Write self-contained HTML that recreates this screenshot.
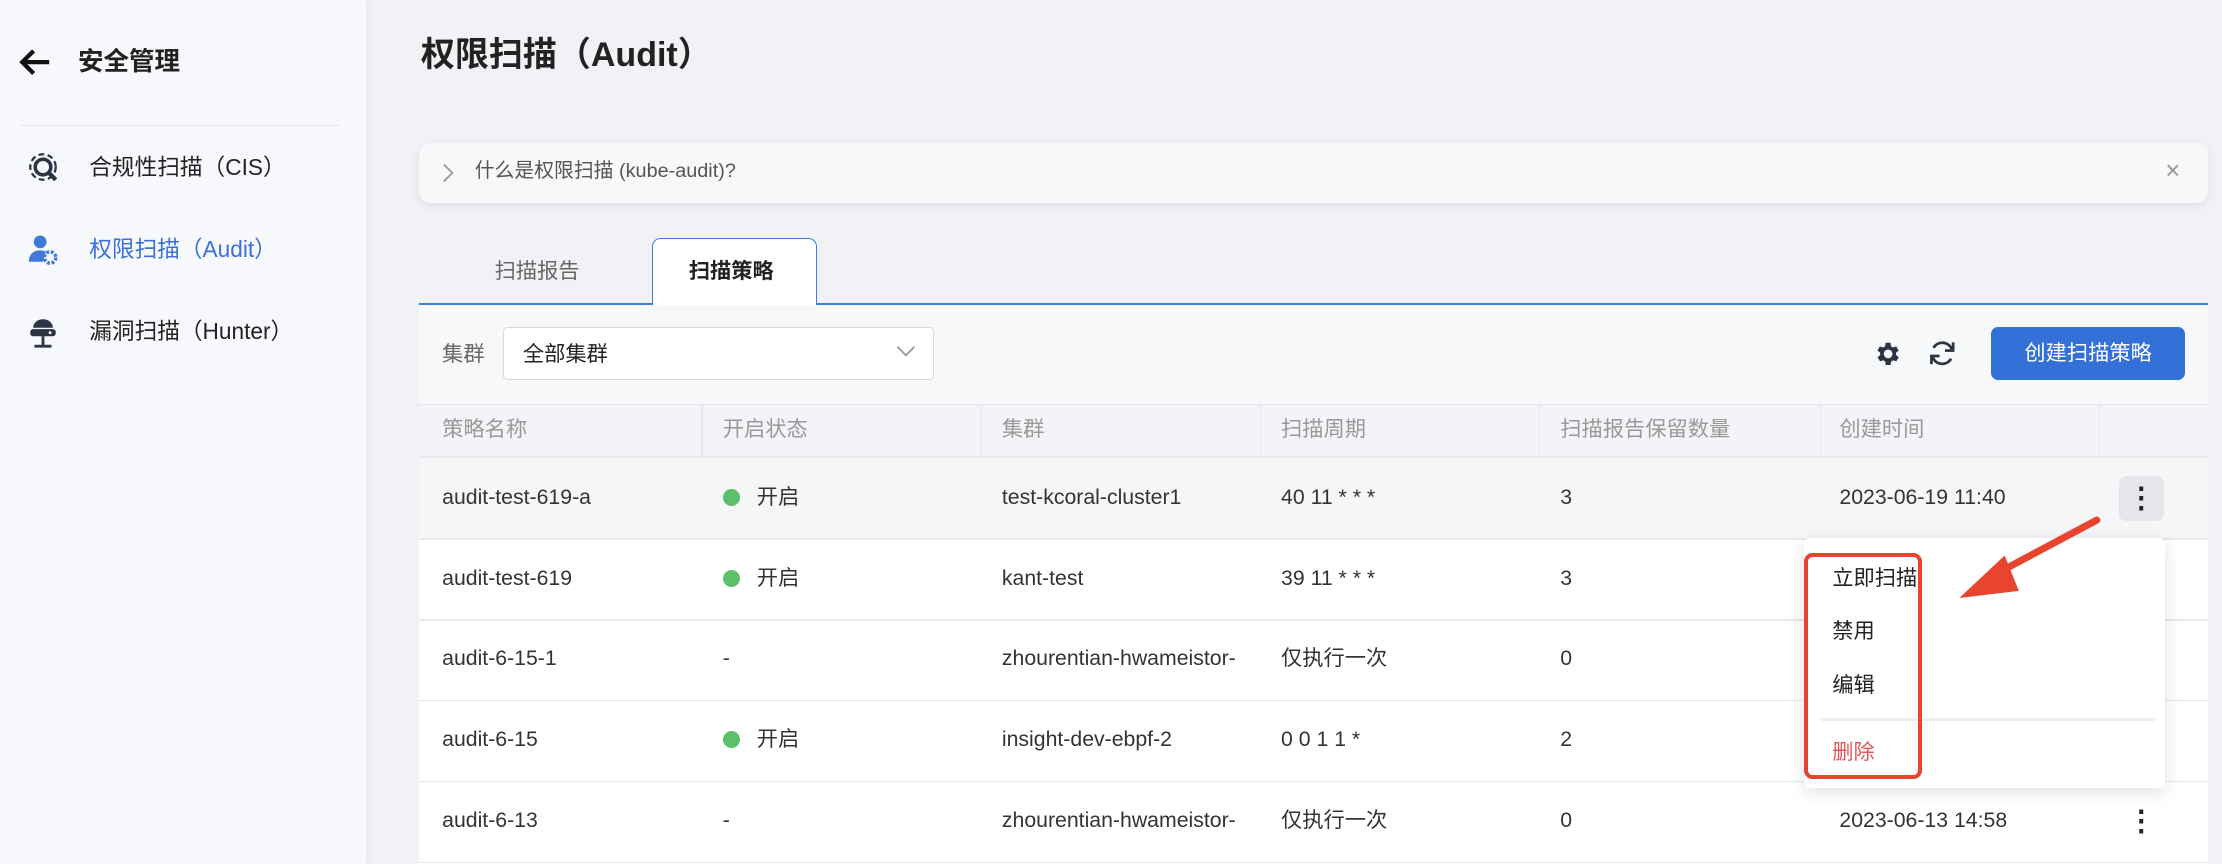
<!DOCTYPE html>
<html><head><meta charset="utf-8">
<style>
html,body{margin:0;padding:0;}
body{width:1568px;height:610px;zoom:1.41709;overflow:hidden;background:#f1f2f6;font-family:"Liberation Sans","Noto Sans CJK SC",sans-serif;position:relative;color:#222;}
.a{position:absolute;}
.side{left:0;top:0;width:258px;height:610px;background:#f7f8fc;box-shadow:1px 0 4px rgba(0,0,0,0.05);}
.mi{font-size:16px;color:#222;line-height:22px;}
.t{font-size:15px;color:#333;white-space:nowrap;line-height:22px;}
.h{font-size:15px;color:#999;line-height:22px;}
.vl{width:1px;background:#e4e6ea;top:285px;height:37px;}
.hl{height:1px;background:#e6e8ec;left:296px;width:1262px;}
.dot{width:12px;height:12px;border-radius:50%;background:#5cc06a;}
</style></head><body>
<div class="a side"></div>
<svg class="a" style="left:13px;top:34px" width="24" height="20" viewBox="0 0 24 20"><path d="M22 10H4M11 2L3 10l8 8" stroke="#111" stroke-width="3" fill="none"/></svg>
<div class="a" style="left:55px;top:32px;font-size:18px;font-weight:bold;line-height:24px;">安全管理</div>
<div class="a" style="left:14px;top:88px;width:226px;height:1px;background:#e4e6ea"></div>
<svg class="a" style="left:18px;top:106px" width="26" height="26" viewBox="0 0 26 26"><circle cx="12" cy="12" r="9" stroke="#2b3443" stroke-width="1.6" stroke-dasharray="4 2.5" fill="none"/><circle cx="12" cy="12" r="5.5" stroke="#2b3443" stroke-width="2.5" fill="none"/><path d="M16 16l5 5" stroke="#2b3443" stroke-width="3"/></svg>
<div class="a mi" style="left:63px;top:107px;">合规性扫描（CIS）</div>
<svg class="a" style="left:18px;top:164px" width="26" height="26" viewBox="0 0 26 26"><circle cx="10" cy="7" r="4.5" fill="#3f7ad9"/><path d="M2 21c0-5 3-8 8-8 2 0 3 .5 4 1l-2 7z" fill="#3f7ad9"/><circle cx="17" cy="18" r="4" stroke="#3f7ad9" stroke-width="2.5" stroke-dasharray="2 1.2" fill="none"/></svg>
<div class="a mi" style="left:63px;top:165px;color:#3a70d8;">权限扫描（Audit）</div>
<svg class="a" style="left:18px;top:222px" width="26" height="26" viewBox="0 0 26 26"><path d="M5 9a7 6 0 0 1 14 0z" fill="#2b3443"/><rect x="3" y="10" width="18" height="5" rx="2" fill="#2b3443"/><circle cx="17" cy="12.5" r="1" fill="#fff"/><path d="M12 15v7M6 22h12" stroke="#2b3443" stroke-width="2"/></svg>
<div class="a mi" style="left:63px;top:223px;">漏洞扫描（Hunter）</div>

<div class="a" style="left:297px;top:24px;font-size:24px;font-weight:bold;line-height:30px;">权限扫描（Audit）</div>
<div class="a" style="left:296px;top:101px;width:1262px;height:42px;background:#f7f8fa;border-radius:8px;box-shadow:0 2px 6px rgba(0,0,0,0.08);"></div>
<svg class="a" style="left:311px;top:115px" width="10" height="14"><path d="M2 1l6 6-6 6" stroke="#999" stroke-width="1.3" fill="none"/></svg>
<div class="a" style="left:335px;top:111px;font-size:14px;color:#555;line-height:20px;">什么是权限扫描 (kube-audit)?</div>
<div class="a" style="left:1528px;top:110px;font-size:18px;color:#999;line-height:22px;">×</div>

<div class="a" style="left:349px;top:181px;font-size:15px;color:#666;line-height:22px;">扫描报告</div>
<div class="a" style="left:296px;top:214px;width:1262px;height:1px;background:#3a80e0"></div>
<div class="a" style="left:460px;top:168px;width:115px;height:47px;background:#fff;border:1px solid #3a80e0;border-bottom:none;border-radius:6px 6px 0 0;"></div>
<div class="a" style="left:486px;top:181px;font-size:15px;font-weight:bold;line-height:22px;">扫描策略</div>

<div class="a" style="left:296px;top:215px;width:1262px;height:395px;background:#f7f8fa;"></div>
<div class="a" style="left:312px;top:239px;font-size:15px;color:#666;line-height:22px;">集群</div>
<div class="a" style="left:355px;top:231px;width:303px;height:36px;background:#fff;border:1px solid #d6d9de;border-radius:3px;"></div>
<div class="a" style="left:369px;top:239px;font-size:15px;line-height:22px;">全部集群</div>
<svg class="a" style="left:632px;top:243px" width="14" height="10"><path d="M1 2l6 6 6-6" stroke="#999" stroke-width="1.3" fill="none"/></svg>
<svg class="a" style="left:1321px;top:239px" width="21" height="21" viewBox="0 0 24 24"><path fill="#2b3443" d="M19.4 13a7.5 7.5 0 0 0 0-2l2.1-1.6-2-3.5-2.5 1a7.5 7.5 0 0 0-1.7-1L15 3h-4l-.4 2.9a7.5 7.5 0 0 0-1.7 1l-2.5-1-2 3.5L6.6 11a7.5 7.5 0 0 0 0 2l-2.1 1.6 2 3.5 2.5-1a7.5 7.5 0 0 0 1.7 1L11 21h4l.4-2.9a7.5 7.5 0 0 0 1.7-1l2.5 1 2-3.5zM13 15.5a3.5 3.5 0 1 1 0-7 3.5 3.5 0 0 1 0 7z"/></svg>
<svg class="a" style="left:1359px;top:238px" width="23" height="23" viewBox="0 0 24 24"><path d="M19 9a7.5 7.5 0 0 0-13.5-1M5 15a7.5 7.5 0 0 0 13.5 1" stroke="#2b3443" stroke-width="2" fill="none"/><path d="M20 4v6h-6M4 20v-6h6" fill="none" stroke="#2b3443" stroke-width="2"/></svg>
<div class="a" style="left:1405px;top:231px;width:137px;height:37px;background:#3370d7;border-radius:5px;color:#fff;font-size:15px;text-align:center;line-height:37px;">创建扫描策略</div>

<div class="a" style="left:296px;top:285px;width:1262px;height:37px;background:#f3f4f7;"></div>
<div class="a hl" style="top:285px"></div>
<div class="a vl" style="left:495px"></div><div class="a vl" style="left:692px"></div><div class="a vl" style="left:889px"></div><div class="a vl" style="left:1086px"></div><div class="a vl" style="left:1284px"></div><div class="a vl" style="left:1481px"></div>
<div class="a h" style="left:312px;top:292px">策略名称</div>
<div class="a h" style="left:510px;top:292px">开启状态</div>
<div class="a h" style="left:707px;top:292px">集群</div>
<div class="a h" style="left:904px;top:292px">扫描周期</div>
<div class="a h" style="left:1101px;top:292px">扫描报告保留数量</div>
<div class="a h" style="left:1298px;top:292px">创建时间</div>

<div class="a" style="left:296px;top:322px;width:1262px;height:58px;background:#f5f6f8;"></div>
<div class="a" style="left:296px;top:380px;width:1262px;height:230px;background:#fff;"></div>
<div class="a hl" style="top:322px"></div><div class="a hl" style="top:380px"></div><div class="a hl" style="top:437px"></div><div class="a hl" style="top:494px"></div><div class="a hl" style="top:551px"></div><div class="a hl" style="top:608px"></div>

<div class="a t" style="left:312px;top:340px">audit-test-619-a</div>
<div class="a dot" style="left:510px;top:345px"></div><div class="a t" style="left:534px;top:340px">开启</div>
<div class="a t" style="left:707px;top:340px">test-kcoral-cluster1</div>
<div class="a t" style="left:904px;top:340px">40 11 * * *</div>
<div class="a t" style="left:1101px;top:340px">3</div>
<div class="a t" style="left:1298px;top:340px">2023-06-19 11:40</div>
<div class="a" style="left:1495px;top:336px;width:32px;height:32px;background:#e4e6ea;border-radius:5px;"></div>
<div class="a" style="left:1495px;top:336px;width:32px;text-align:center;font-size:20px;font-weight:bold;line-height:32px;">⋮</div>

<div class="a t" style="left:312px;top:397px">audit-test-619</div>
<div class="a dot" style="left:510px;top:402px"></div><div class="a t" style="left:534px;top:397px">开启</div>
<div class="a t" style="left:707px;top:397px">kant-test</div>
<div class="a t" style="left:904px;top:397px">39 11 * * *</div>
<div class="a t" style="left:1101px;top:397px">3</div>

<div class="a t" style="left:312px;top:454px">audit-6-15-1</div>
<div class="a t" style="left:510px;top:454px">-</div>
<div class="a t" style="left:707px;top:454px;width:183px;overflow:hidden">zhourentian-hwameistor-</div>
<div class="a t" style="left:904px;top:454px">仅执行一次</div>
<div class="a t" style="left:1101px;top:454px">0</div>

<div class="a t" style="left:312px;top:511px">audit-6-15</div>
<div class="a dot" style="left:510px;top:516px"></div><div class="a t" style="left:534px;top:511px">开启</div>
<div class="a t" style="left:707px;top:511px">insight-dev-ebpf-2</div>
<div class="a t" style="left:904px;top:511px">0 0 1 1 *</div>
<div class="a t" style="left:1101px;top:511px">2</div>

<div class="a t" style="left:312px;top:568px">audit-6-13</div>
<div class="a t" style="left:510px;top:568px">-</div>
<div class="a t" style="left:707px;top:568px;width:183px;overflow:hidden">zhourentian-hwameistor-</div>
<div class="a t" style="left:904px;top:568px">仅执行一次</div>
<div class="a t" style="left:1101px;top:568px">0</div>
<div class="a t" style="left:1298px;top:568px">2023-06-13 14:58</div>
<div class="a" style="left:1495px;top:564px;width:32px;text-align:center;font-size:20px;font-weight:bold;line-height:32px;">⋮</div>

<div class="a" style="left:1273px;top:380px;width:255px;height:176px;background:#fff;border-radius:4px;box-shadow:0 3px 12px rgba(0,0,0,0.12);"></div>
<div class="a t" style="left:1293px;top:397px;color:#222">立即扫描</div>
<div class="a t" style="left:1293px;top:435px;color:#222">禁用</div>
<div class="a t" style="left:1293px;top:473px;color:#222">编辑</div>
<div class="a" style="left:1285px;top:507px;width:236px;height:2px;background:#eceef1"></div>
<div class="a t" style="left:1293px;top:520px;color:#e55353">删除</div>
<div class="a" style="left:1273px;top:390px;width:78px;height:154px;border:3px solid #e8442e;border-radius:6px;"></div>
<svg class="a" style="left:1375px;top:362px" width="110" height="66" viewBox="0 0 110 66"><path d="M105 5L30 45" stroke="#e8442e" stroke-width="5" stroke-linecap="round"/><path d="M8 60L40 30L50 55z" fill="#e8442e"/></svg>
</body></html>
